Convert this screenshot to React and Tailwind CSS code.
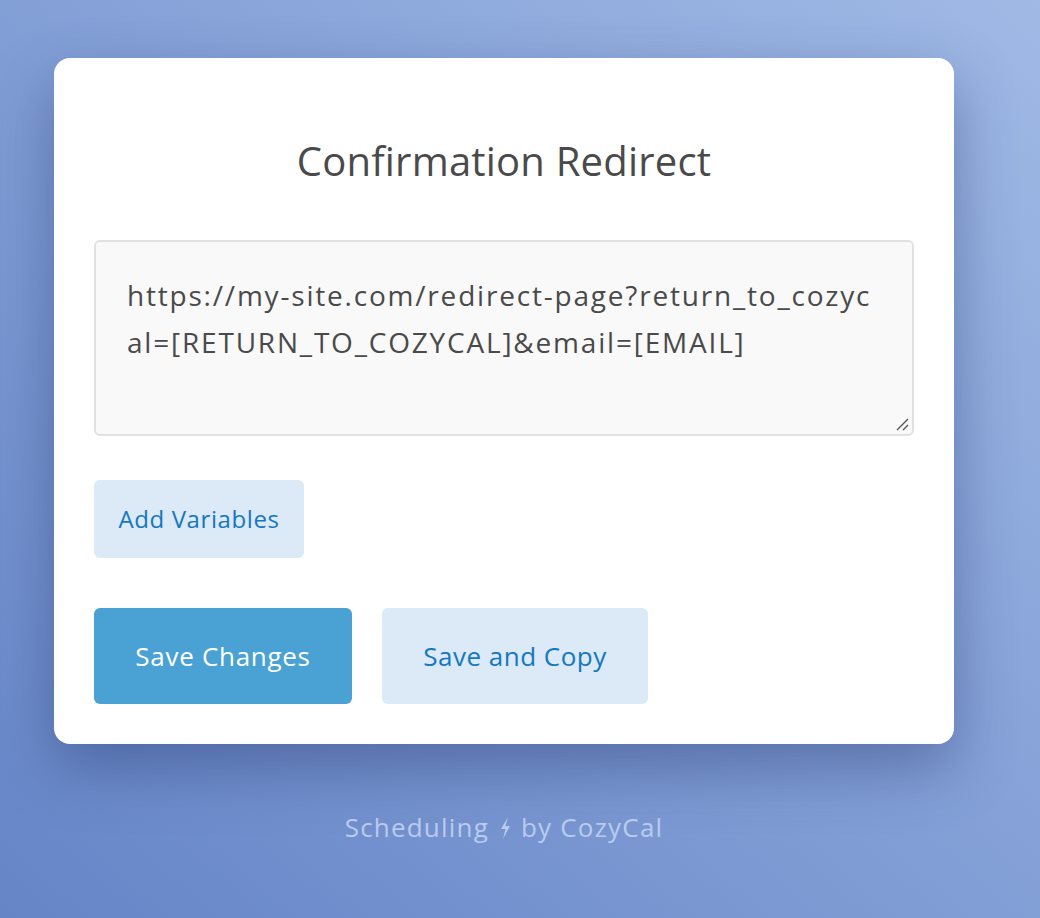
export default function App() {
  return (
    <div
      className="min-h-screen w-full flex flex-col items-center bg-linear-to-tr from-[#6685c7] to-[#a0b9e5] pr-[32px] pb-10"
      style={{ fontFamily: '"Open Sans", "Noto Sans", sans-serif' }}
    >
      <div className="mt-[58px] w-[900px] bg-white rounded-2xl shadow-[0_24px_60px_rgba(40,60,115,0.45)] px-10 pt-[78px] pb-10 box-border">
        <h1 className="text-center text-[40px] leading-[50px] tracking-[0.2px] text-[#4a4a4a] font-normal">
          Confirmation Redirect
        </h1>

        <div className="relative mt-[54px] h-[196px] rounded-md border-2 border-[#e1e1e1] bg-[#f9f9f9] pl-[31px] pt-[30px] text-[28px] leading-[47px] tracking-[1.8px] text-[#4a4a4a]">
          <span className="block whitespace-nowrap">https://my-site.com/redirect-page?return_to_cozyc</span>
          <span className="block whitespace-nowrap">al=[RETURN_TO_COZYCAL]&amp;email=[EMAIL]</span>
          <svg className="absolute right-[3px] bottom-[3px]" width="14" height="14" viewBox="0 0 14 14">
            <path d="M2 13 L13 2 M8 13 L13 8" stroke="#555" strokeWidth="1.4" />
          </svg>
        </div>

        <div className="mt-[44px]">
          <button className="w-[210px] h-[78px] rounded-md bg-[#dce9f6] text-[#1478bf] text-[24px] tracking-[0.6px]">
            Add Variables
          </button>
        </div>

        <div className="mt-[50px] flex gap-[30px]">
          <button className="w-[258px] h-[96px] rounded-md bg-[#4aa1d3] text-white text-[26px] tracking-[0.7px]">
            Save Changes
          </button>
          <button className="w-[266px] h-[96px] rounded-md bg-[#dce9f6] text-[#1478bf] text-[26px] tracking-[0.5px]">
            Save and Copy
          </button>
        </div>
      </div>

      <div className="mt-[64px] flex items-center gap-[9px] text-[26px] tracking-[1.2px] text-[#b9cbee]">
        <span>Scheduling</span>
        <svg width="14" height="26" viewBox="0 0 14 26">
          <path d="M10 2 L3 14 H7.5 L5 24 L12 11 H7.5 Z" fill="#b9cbee" />
        </svg>
        <span>by CozyCal</span>
      </div>
    </div>
  )
}
